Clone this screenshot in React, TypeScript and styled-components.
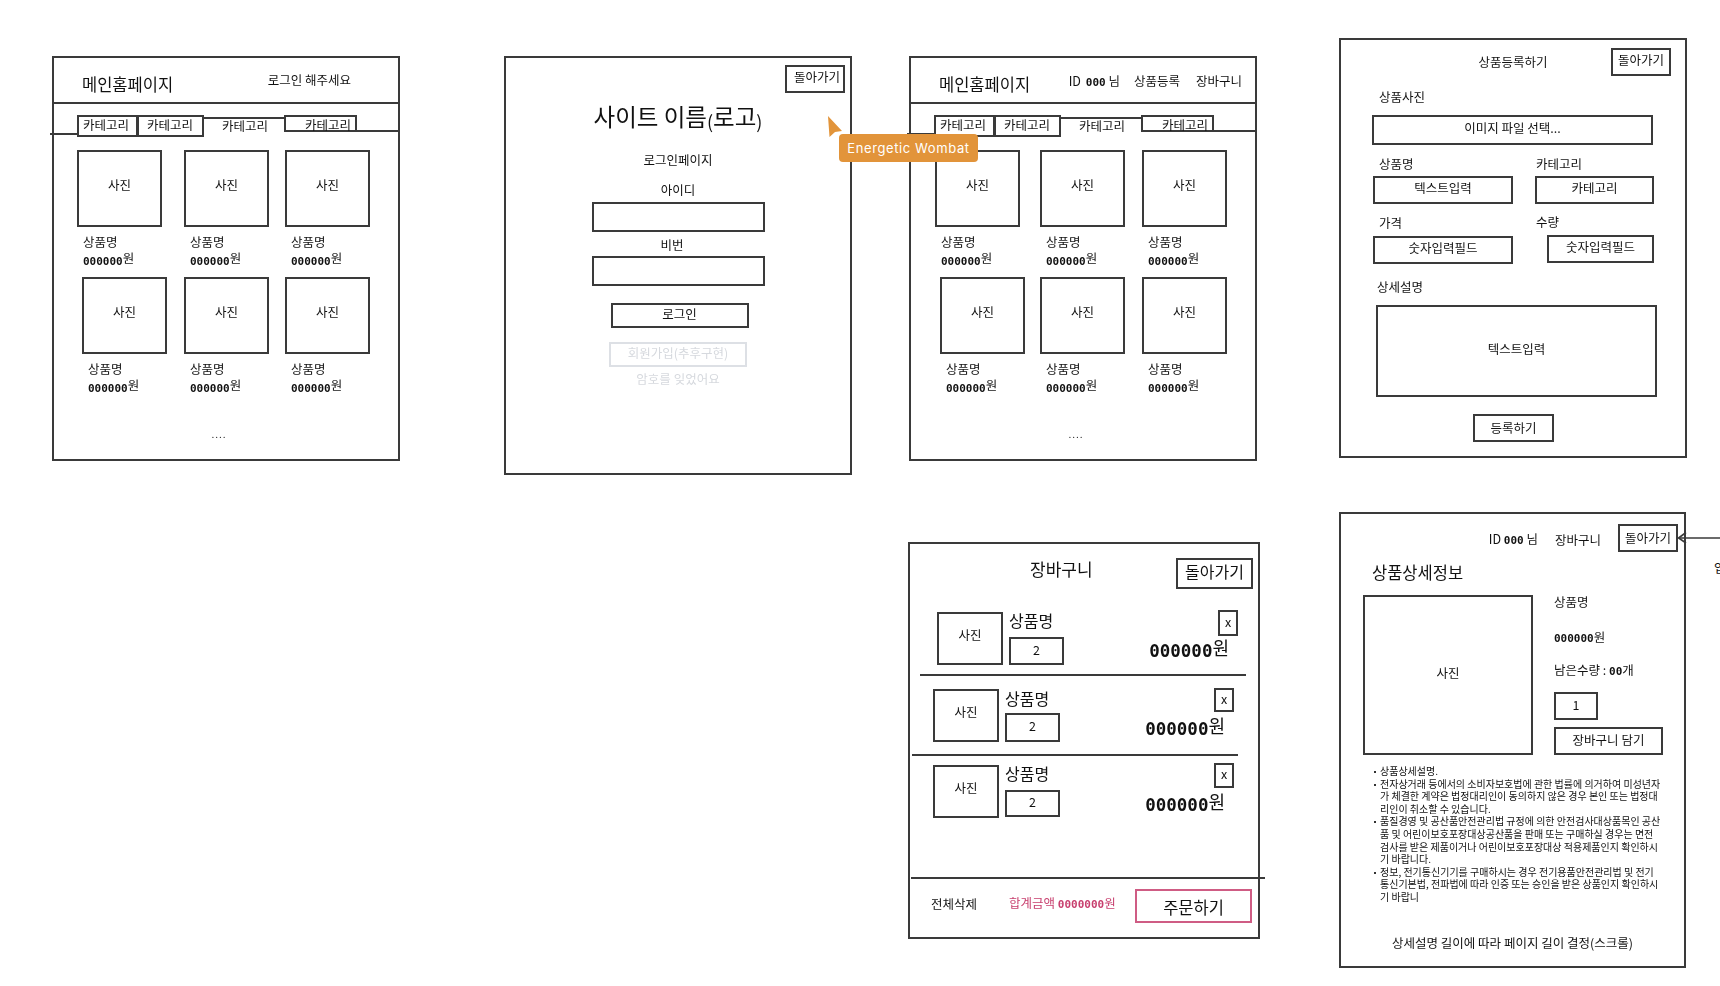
import { Fragment } from 'react';
import styled, { createGlobalStyle } from 'styled-components';

const Global = createGlobalStyle`
* { box-sizing: border-box; }
html, body { margin: 0; background: #fff; }
body {
    overflow: hidden;
    color: #111;
    font-family: "Noto Sans CJK KR", "Liberation Sans", sans-serif;
    font-size: 12.5px;
    line-height: 18px;
}
`

const INK = '#3a3a3a';
const PINK = '#c8406f';

const Canvas = styled.div`
position: relative;
width: 1720px;
height: 986px;
overflow: hidden;
`
/* each wireframe sits at its own spot on the whiteboard */
const Frame = styled.section<{ $x: number; $y: number; $w: number; $h: number }>`
position: absolute;
left: ${p => p.$x}px;
top: ${p => p.$y}px;
width: ${p => p.$w}px;
height: ${p => p.$h}px;
border: 2px solid ${INK};
filter: blur(0.35px);
`
const Box = styled.div<{ $w: number; $h: number; $mt?: number; $ml?: number; $lift?: number }>`
display: flex;
align-items: center;
justify-content: center;
flex: none;
width: ${p => p.$w}px;
height: ${p => p.$h}px;
margin-top: ${p => p.$mt ?? 0}px;
margin-left: ${p => p.$ml ?? 0}px;
border: 2px solid ${INK};
padding-bottom: ${p => p.$lift ?? 3}px;
`
const Label = styled.div<{ $mt?: number; $ml?: number }>`
height: 18px;
margin-top: ${p => p.$mt ?? 0}px;
margin-left: ${p => p.$ml ?? 0}px;
white-space: nowrap;
`
const Num = styled.span<{ $size?: number }>`
font-family: "DejaVu Sans Mono", monospace;
font-weight: 700;
font-size: ${p => p.$size ?? 11}px;
`
const Won = styled.span<{ $size?: number }>`
font-size: ${p => p.$size ?? 12.5}px;
position: relative;
top: -2px;
`

/* main page */
const HomeHeader = styled.header<{ $pr: number; $navDrop: number }>`
display: flex;
align-items: center;
height: 46px;
padding: 0 ${p => p.$pr}px 0 28px;
border-bottom: 2px solid ${INK};
nav {
    display: flex;
    gap: 14px;
    margin-left: auto;
    margin-bottom: ${p => p.$navDrop}px;
}
nav span:last-child { margin-left: 2px; }
`
const HomeTitle = styled.h1`
margin: 8px 0 0;
font-size: 16.5px;
font-weight: 400;
line-height: 22px;
`
const TabBar = styled.div`
display: flex;
align-items: flex-start;
height: 22px;
margin-top: 11px;
line-height: 15px;
`
const LeadRule = styled.div<{ $w: number }>`
flex: none;
width: ${p => p.$w}px;
height: 20px;
margin-left: -4px;
border-bottom: 2px solid ${INK};
`
const Tab = styled.div<{ $w: number; $pl: number; $h: number }>`
flex: none;
width: ${p => p.$w}px;
height: ${p => p.$h}px;
padding-left: ${p => p.$pl}px;
border: 2px solid ${INK};
margin-left: -1px;
`
const OpenTab = styled.div`
flex: none;
width: 81px;
height: 21px;
margin-top: 2px;
padding-left: 18px;
border-top: 2px solid ${INK};
line-height: 13px;
`
const TrailRule = styled.div`
flex: 1;
height: 17px;
margin-left: -1px;
border-bottom: 2px solid ${INK};
`
const ProductGrid = styled.div<{ $pl: number; $cols: string }>`
display: grid;
grid-template-columns: ${p => p.$cols};
row-gap: 8px;
margin-top: 13px;
padding-left: ${p => p.$pl}px;
`
const Card = styled.div<{ $shift: number }>`
margin-left: ${p => p.$shift}px;
`
const Photo = styled.div<{ $w: number; $h: number; $lift?: number; $mt?: number }>`
display: flex;
align-items: center;
justify-content: center;
flex: none;
width: ${p => p.$w}px;
height: ${p => p.$h}px;
margin-top: ${p => p.$mt ?? 0}px;
padding-bottom: ${p => p.$lift ?? 8}px;
border: 2px solid ${INK};
`
const CardName = styled.div`
height: 18px;
margin-top: 6px;
padding-left: 6px;
`
const CardPrice = styled.div`
height: 18px;
padding-left: 6px;
`
const Ellipsis = styled.div`
margin-top: 29px;
padding-right: 14px;
text-align: center;
font-size: 10px;
letter-spacing: 1px;
`

/* login */
const LoginColumn = styled.div`
display: flex;
flex-direction: column;
align-items: center;
height: 100%;
`
const BackRow = styled.div`
display: flex;
justify-content: flex-end;
align-self: stretch;
padding: 7px 5px 0 0;
`
const BackButton = styled.div<{ $w?: number; $h?: number; $size?: number; $lift?: number; $pl?: number }>`
flex: none;
display: flex;
align-items: center;
justify-content: center;
width: ${p => p.$w ?? 60}px;
height: ${p => p.$h ?? 28}px;
padding-left: ${p => p.$pl ?? 0}px;
padding-bottom: ${p => p.$lift ?? 4}px;
border: 2px solid ${INK};
font-size: ${p => p.$size ?? 12.5}px;
`
const SiteTitle = styled.h1`
height: 30px;
margin: 8px 0 0;
font-size: 23.5px;
font-weight: 400;
line-height: 30px;
white-space: nowrap;
small {
    font-size: 18px;
    position: relative;
    top: 3px;
}
`
const GhostBox = styled(Box)`
border-color: #dde0e5;
color: #d6d9de;
`
const GhostLabel = styled(Label)`
color: #d6d9de;
`

/* register */
const RegisterHeader = styled.div`
display: grid;
grid-template-columns: 1fr auto 1fr;
align-items: center;
margin-top: 8px;
padding: 0 14px;
& > :last-child { justify-self: end; }
`
const FieldGrid = styled.div`
display: grid;
grid-template-columns: 162px 1fr;
margin-left: 32px;
`
const Center = styled.div<{ $mt: number; $w: number }>`
display: flex;
justify-content: center;
margin-top: ${p => p.$mt}px;
margin-left: ${p => p.$w}px;
width: fit-content;
`

/* cart */
const CartHeader = styled.div`
display: flex;
align-items: flex-start;
padding: 13px 5px 0 120px;
& > :last-child { margin: 1px 0 0 auto; }
`
const CartTitle = styled.h2`
margin: 0;
font-size: 17px;
font-weight: 400;
line-height: 24px;
`
const CartRow = styled.div<{ $mt: number; $pl: number; $pr: number }>`
display: flex;
align-items: flex-start;
margin-top: ${p => p.$mt}px;
padding: 0 ${p => p.$pr}px 0 ${p => p.$pl}px;
`
const CartInfo = styled.div`
margin-left: 6px;
`
const CartName = styled.div<{ $mt: number }>`
margin-top: ${p => p.$mt}px;
font-size: 16px;
line-height: 20px;
`
const CartSide = styled.div`
display: flex;
flex-direction: column;
align-items: flex-end;
margin-left: auto;
`
const CartPrice = styled.div<{ $mt: number }>`
height: 22px;
margin-top: ${p => p.$mt}px;
margin-right: 9px;
line-height: 22px;
white-space: nowrap;
`
const CartRule = styled.hr<{ $mt: number; $ml: number; $w: number }>`
width: ${p => p.$w}px;
height: 2px;
margin: ${p => p.$mt}px 0 0 ${p => p.$ml}px;
border: 0;
background: ${INK};
`
const CartFooter = styled.div`
display: flex;
align-items: center;
margin-top: 10px;
padding: 0 6px 0 21px;
`
const FooterText = styled.div<{ $ml?: number; $color?: string }>`
margin-left: ${p => p.$ml ?? 0}px;
margin-bottom: 5px;
color: ${p => p.$color ?? 'inherit'};
white-space: nowrap;
`
const OrderButton = styled.div`
display: flex;
align-items: center;
justify-content: center;
width: 117px;
height: 34px;
margin-left: auto;
padding-top: 1px;
border: 2px solid #cf5c84;
font-size: 16.5px;
`

/* detail */
const DetailTop = styled.div`
display: flex;
align-items: center;
justify-content: flex-end;
gap: 17px;
padding: 10px 6px 0 0;
& > :not(:last-child) { margin-top: 3px; }
`
const DetailTitle = styled.h2`
margin: 9px 0 0 31px;
font-size: 16.5px;
font-weight: 400;
line-height: 22px;
`
const DetailBody = styled.div`
display: flex;
margin: 12px 0 0 22px;
`
const DetailSide = styled.div`
display: flex;
flex-direction: column;
margin: -2px 0 0 21px;
`
const BulletList = styled.ul`
margin: 10px 0 0 39px;
padding: 0;
list-style: none;
font-size: 10px;
line-height: 12.6px;
white-space: nowrap;
li {
    position: relative;
}
li::before {
    content: "";
    position: absolute;
    left: -6px;
    top: 6px;
    width: 2px;
    height: 2px;
    background: #333;
}
`
const ScrollNote = styled.p`
margin: 30px 0 0;
text-align: center;
white-space: nowrap;
`

/* overlays */
const CursorIcon = styled.svg`
position: absolute;
left: 826px;
top: 114px;
`
const CursorTag = styled.div`
position: absolute;
left: 839px;
top: 134px;
width: 139px;
height: 28px;
border-radius: 4px;
background: #e2943a;
color: #fff;
font-family: Inter, "Liberation Sans", sans-serif;
font-size: 13px;
letter-spacing: 0.6px;
line-height: 28px;
text-align: center;
white-space: nowrap;
`
const ArrowIcon = styled.svg`
position: absolute;
left: 1676px;
top: 530px;
`
const CutNote = styled.div`
position: absolute;
left: 1714px;
top: 559px;
`

const TabRow = ({ lead }: { lead: number }) => (
    <TabBar>
        <LeadRule $w={lead} />
        <Tab $w={61} $pl={4} $h={22}>카테고리</Tab>
        <Tab $w={67} $pl={8} $h={22}>카테고리</Tab>
        <OpenTab>카테고리</OpenTab>
        <Tab $w={73} $pl={19} $h={17}>카테고리</Tab>
        <TrailRule />
    </TabBar>
)

const Product = ({ shift }: { shift: number }) => (
    <Card $shift={shift}>
        <Photo $w={85} $h={77}>사진</Photo>
        <CardName>상품명</CardName>
        <CardPrice><Num>000000</Num><Won>원</Won></CardPrice>
    </Card>
)

const HomePage = ({ x, w, nav, navRight, navDrop, lead, pl, cols }: {
    x: number; w: number; nav: string[]; navRight: number; navDrop: number; lead: number; pl: number; cols: string;
}) => (
    <Frame $x={x} $y={56} $w={w} $h={405}>
        <HomeHeader $pr={navRight} $navDrop={navDrop}>
            <HomeTitle>메인홈페이지</HomeTitle>
            <nav>
                {nav.map(item => item === 'ID' ? (
                    <span key={item}>ID <Num>000</Num> 님</span>
                ) : (
                    <span key={item}>{item}</span>
                ))}
            </nav>
        </HomeHeader>
        <TabRow lead={lead} />
        <ProductGrid $pl={pl} $cols={cols}>
            {[0, 0, 0, 5, 0, 0].map((shift, i) => <Product key={i} shift={shift} />)}
        </ProductGrid>
        <Ellipsis>....</Ellipsis>
    </Frame>
)

const cartRows = [
    { mt: 21, pl: 27, pr: 20, photoTop: 2, nameTop: 0, qtyTop: 7, qtyH: 28, xH: 26, priceTop: 2 },
    { mt: 12, pl: 23, pr: 24, photoTop: 1, nameTop: 0, qtyTop: 5, qtyH: 29, xH: 24, priceTop: 4 },
    { mt: 7, pl: 23, pr: 24, photoTop: 2, nameTop: 0, qtyTop: 7, qtyH: 27, xH: 25, priceTop: 4 },
]
const cartRules = [
    { mt: 9, ml: 10 },
    { mt: 12, ml: 2 },
]

const App = () => {
    return (
        <Canvas>
            <Global />

            <HomePage
                x={52} w={348} nav={['로그인 해주세요']} navRight={47} navDrop={0}
                lead={28} pl={23} cols="107px 101px 1fr"
            />

            <Frame $x={504} $y={56} $w={348} $h={419}>
                <LoginColumn>
                    <BackRow><BackButton $pl={4}>돌아가기</BackButton></BackRow>
                    <SiteTitle>사이트 이름<small>(</small>로고<small>)</small></SiteTitle>
                    <Label $mt={20}>로그인페이지</Label>
                    <Label $mt={12}>아이디</Label>
                    <Box $w={173} $h={30} $mt={3} />
                    <Label $mt={4} $ml={-12}>비번</Label>
                    <Box $w={173} $h={30} $mt={2} />
                    <Box $w={138} $h={25} $mt={17} $ml={3}>로그인</Box>
                    <GhostBox $w={138} $h={25} $mt={14}>회원가입(추후구현)</GhostBox>
                    <GhostLabel $mt={3}>암호를 잊었어요</GhostLabel>
                </LoginColumn>
            </Frame>

            <HomePage
                x={909} w={348} nav={['ID', '상품등록', '장바구니']} navRight={13} navDrop={-4}
                lead={28} pl={24} cols="105px 102px 1fr"
            />

            <Frame $x={1339} $y={38} $w={348} $h={420}>
                <RegisterHeader>
                    <span />
                    <span>상품등록하기</span>
                    <BackButton>돌아가기</BackButton>
                </RegisterHeader>
                <Label $mt={12} $ml={38}>상품사진</Label>
                <Box $w={281} $h={30} $mt={9} $ml={31} $lift={5}>이미지 파일 선택...</Box>
                <FieldGrid>
                    <div>
                        <Label $mt={10} $ml={6}>상품명</Label>
                        <Box $w={140} $h={28} $mt={3} $lift={5}>텍스트입력</Box>
                    </div>
                    <div>
                        <Label $mt={10} $ml={1}>카테고리</Label>
                        <Box $w={119} $h={28} $mt={3} $lift={5}>카테고리</Box>
                    </div>
                    <div>
                        <Label $mt={10} $ml={6}>가격</Label>
                        <Box $w={140} $h={28} $mt={4} $lift={5}>숫자입력필드</Box>
                    </div>
                    <div>
                        <Label $mt={9} $ml={1}>수량</Label>
                        <Box $w={107} $h={28} $mt={4} $ml={12} $lift={5}>숫자입력필드</Box>
                    </div>
                </FieldGrid>
                <Label $mt={14} $ml={36}>상세설명</Label>
                <Box $w={281} $h={92} $mt={9} $ml={35} $lift={5}>텍스트입력</Box>
                <Center $mt={17} $w={132}>
                    <Box $w={81} $h={28} $lift={0}>등록하기</Box>
                </Center>
            </Frame>

            <Frame $x={908} $y={542} $w={352} $h={397}>
                <CartHeader>
                    <CartTitle>장바구니</CartTitle>
                    <BackButton $w={77} $h={31} $size={16} $lift={5}>돌아가기</BackButton>
                </CartHeader>
                {cartRows.map((row, i) => (
                    <Fragment key={i}>
                        <CartRow $mt={row.mt} $pl={row.pl} $pr={row.pr}>
                            <Photo $w={66} $h={53} $mt={row.photoTop}>사진</Photo>
                            <CartInfo>
                                <CartName $mt={row.nameTop}>상품명</CartName>
                                <Box $w={55} $h={row.qtyH} $mt={row.qtyTop}>2</Box>
                            </CartInfo>
                            <CartSide>
                                <Box $w={20} $h={row.xH}>x</Box>
                                <CartPrice $mt={row.priceTop}><Num $size={17.5}>000000</Num><Won $size={18}>원</Won></CartPrice>
                            </CartSide>
                        </CartRow>
                        {cartRules[i] && <CartRule $mt={cartRules[i].mt} $ml={cartRules[i].ml} $w={326} />}
                    </Fragment>
                ))}
                <CartRule $mt={59} $ml={1} $w={354} />
                <CartFooter>
                    <FooterText>전체삭제</FooterText>
                    <FooterText $ml={32} $color={PINK}>합계금액 <Num>0000000</Num>원</FooterText>
                    <OrderButton>주문하기</OrderButton>
                </CartFooter>
            </Frame>

            <Frame $x={1339} $y={512} $w={347} $h={456}>
                <DetailTop>
                    <span>ID <Num>000</Num> 님</span>
                    <span>장바구니</span>
                    <BackButton $lift={0}>돌아가기</BackButton>
                </DetailTop>
                <DetailTitle>상품상세정보</DetailTitle>
                <DetailBody>
                    <Photo $w={170} $h={160} $lift={4}>사진</Photo>
                    <DetailSide>
                        <Label>상품명</Label>
                        <Label $mt={17}><Num>000000</Num>원</Label>
                        <Label $mt={15}>남은수량 : <Num>00</Num>개</Label>
                        <Box $w={44} $h={28} $mt={13}>1</Box>
                        <Box $w={109} $h={28} $mt={7}>장바구니 담기</Box>
                    </DetailSide>
                </DetailBody>
                <BulletList>
                    <li>상품상세설명.</li>
                    <li>
                        전자상거래 등에서의 소비자보호법에 관한 법률에 의거하여 미성년자<br />
                        가 체결한 계약은 법정대리인이 동의하지 않은 경우 본인 또는 법정대<br />
                        리인이 취소할 수 있습니다.
                    </li>
                    <li>
                        품질경영 및 공산품안전관리법 규정에 의한 안전검사대상품목인 공산<br />
                        품 및 어린이보호포장대상공산품을 판매 또는 구매하실 경우는 면전<br />
                        검사를 받은 제품이거나 어린이보호포장대상 적용제품인지 확인하시<br />
                        기 바랍니다.
                    </li>
                    <li>
                        정보, 전기통신기기를 구매하시는 경우 전기용품안전관리법 및 전기<br />
                        통신기본법, 전파법에 따라 인증 또는 승인을 받은 상품인지 확인하시<br />
                        기 바랍니
                    </li>
                </BulletList>
                <ScrollNote>상세설명 길이에 따라 페이지 길이 결정(스크롤)</ScrollNote>
            </Frame>

            <ArrowIcon width="44" height="16" viewBox="0 0 44 16" fill="none" stroke={INK} strokeWidth="1.6">
                <path d="M44 8H3" />
                <path d="M10 2.5L2.5 8L10 13" />
            </ArrowIcon>
            <CutNote>입</CutNote>

            <CursorIcon width="18" height="24" viewBox="0 0 18 24">
                <path d="M2 2L16 17L9 18L3.5 23Z" fill="#e2943a" />
            </CursorIcon>
            <CursorTag>Energetic Wombat</CursorTag>
        </Canvas>
    )
}
export default App
